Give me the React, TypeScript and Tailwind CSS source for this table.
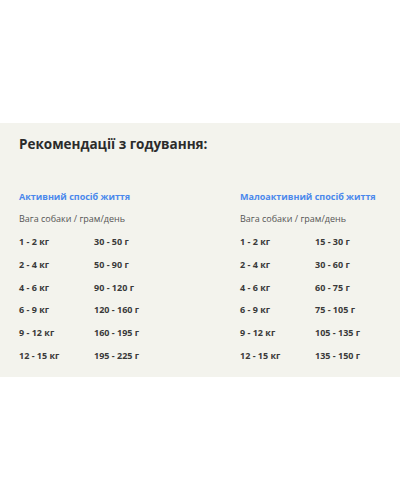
const rowsA = [
  ["1 - 2 кг", "30 - 50 г"],
  ["2 - 4 кг", "50 - 90 г"],
  ["4 - 6 кг", "90 - 120 г"],
  ["6 - 9 кг", "120 - 160 г"],
  ["9 - 12 кг", "160 - 195 г"],
  ["12 - 15 кг", "195 - 225 г"],
];
const rowsB = [
  ["1 - 2 кг", "15 - 30 г"],
  ["2 - 4 кг", "30 - 60 г"],
  ["4 - 6 кг", "60 - 75 г"],
  ["6 - 9 кг", "75 - 105 г"],
  ["9 - 12 кг", "105 - 135 г"],
  ["12 - 15 кг", "135 - 150 г"],
];

function Col({ title, rows }: { title: string; rows: string[][] }) {
  return (
    <div className="flex flex-col">
      <div className="text-[9px] font-bold text-[#4a88ec] leading-[12px]">{title}</div>
      <div className="mt-[10px] text-[9px] text-[#555] leading-[12px]">Вага собаки / грам/день</div>
      <div className="mt-[11px] flex flex-col gap-[10.8px]">
        {rows.map(([a, b]) => (
          <div key={a} className="flex text-[9px] font-bold text-[#3a3a3a] leading-[12px]">
            <span className="w-[75px]">{a}</span>
            <span>{b}</span>
          </div>
        ))}
      </div>
    </div>
  );
}

export default function App() {
  return (
    <div className="w-[400px] h-[500px] bg-white pt-[123px]" style={{ fontFamily: '"Open Sans", sans-serif' }}>
      <div className="h-[254px] bg-[#f3f3ed] pl-[19px] pt-[12px]">
        <h2 className="text-[13.5px] font-bold text-[#2b2b2b] leading-[18px]">Рекомендації з годування:</h2>
        <div className="mt-[38px] grid grid-cols-[221px_1fr]">
          <Col title="Активний спосіб життя" rows={rowsA} />
          <Col title="Малоактивний спосіб життя" rows={rowsB} />
        </div>
      </div>
    </div>
  );
}
